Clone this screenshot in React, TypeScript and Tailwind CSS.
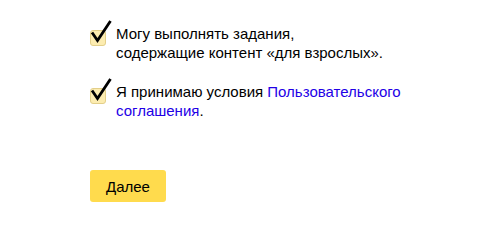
import React from "react";

function Check() {
  return (
    <div className="relative w-[16px] h-[16px] shrink-0 mt-[6px]">
      <div className="absolute inset-0 rounded-[3px] bg-[#fcecb0] border border-[#e3cf8a]" />
      <svg className="absolute left-0 top-[-10px]" width="22" height="24" viewBox="0 0 22 24">
        <path d="M2 12.5 L7.5 20.5 L20.5 1" fill="none" stroke="#000" strokeWidth="2.8" strokeLinecap="butt" strokeLinejoin="miter" />
      </svg>
    </div>
  );
}

export default function App() {
  return (
    <div className="w-[478px] h-[252px] bg-white font-['Liberation_Sans',Arial,sans-serif] text-[15px] leading-[19px] text-black">
      <div className="pl-[90px] pt-[24px] flex flex-col">
        <div className="flex gap-[10px]">
          <Check />
          <div>
            Могу выполнять задания,
            <br />
            содержащие контент «для взрослых».
          </div>
        </div>
        <div className="flex gap-[10px] mt-[20px]">
          <Check />
          <div>
            Я принимаю условия <span className="text-[#2200e6]">Пользовательского</span>
            <br />
            <span className="text-[#2200e6]">соглашения</span>.
          </div>
        </div>
        <button className="mt-[50px] w-[76px] h-[32px] rounded-[3px] bg-[#ffdb4d] text-[15px] text-black">
          Далее
        </button>
      </div>
    </div>
  );
}
